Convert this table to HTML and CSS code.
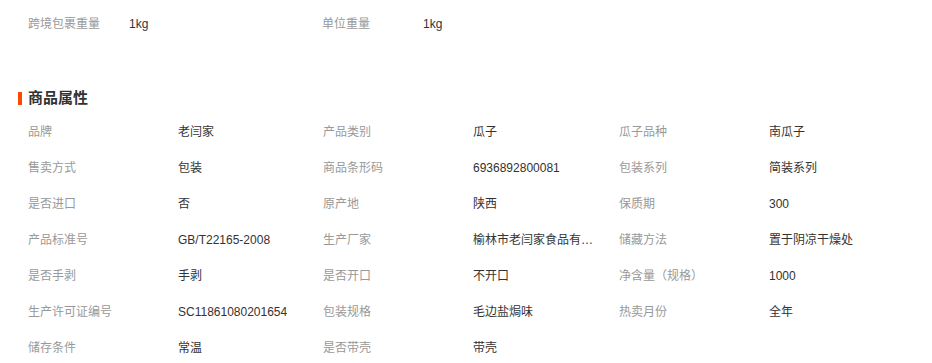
FILE: index.html
```html
<!DOCTYPE html>
<html lang="zh-CN">
<head>
<meta charset="utf-8">
<title>商品属性</title>
<link rel="stylesheet" href="styles.css">
</head>
<body>
<div class="page">
  <div class="weight-row">
    <div class="weight-item"><span class="w-label">跨境包裹重量</span><span class="w-value">1kg</span></div>
    <div class="weight-item"><span class="w-label">单位重量</span><span class="w-value">1kg</span></div>
  </div>

  <h2 class="section-title">商品属性</h2>

  <ul class="attrs">
    <li class="attr"><span class="a-label">品牌</span><span class="a-value">老闫家</span></li>
    <li class="attr"><span class="a-label">产品类别</span><span class="a-value">瓜子</span></li>
    <li class="attr"><span class="a-label">瓜子品种</span><span class="a-value">南瓜子</span></li>

    <li class="attr"><span class="a-label">售卖方式</span><span class="a-value">包装</span></li>
    <li class="attr"><span class="a-label">商品条形码</span><span class="a-value">6936892800081</span></li>
    <li class="attr"><span class="a-label">包装系列</span><span class="a-value">简装系列</span></li>

    <li class="attr"><span class="a-label">是否进口</span><span class="a-value">否</span></li>
    <li class="attr"><span class="a-label">原产地</span><span class="a-value">陕西</span></li>
    <li class="attr"><span class="a-label">保质期</span><span class="a-value">300</span></li>

    <li class="attr"><span class="a-label">产品标准号</span><span class="a-value">GB/T22165-2008</span></li>
    <li class="attr"><span class="a-label">生产厂家</span><span class="a-value" title="榆林市老闫家食品有限公司">榆林市老闫家食品有限公司</span></li>
    <li class="attr"><span class="a-label">储藏方法</span><span class="a-value">置于阴凉干燥处</span></li>

    <li class="attr"><span class="a-label">是否手剥</span><span class="a-value">手剥</span></li>
    <li class="attr"><span class="a-label">是否开口</span><span class="a-value">不开口</span></li>
    <li class="attr"><span class="a-label">净含量（规格）</span><span class="a-value">1000</span></li>

    <li class="attr"><span class="a-label">生产许可证编号</span><span class="a-value">SC11861080201654</span></li>
    <li class="attr"><span class="a-label">包装规格</span><span class="a-value">毛边盐焗味</span></li>
    <li class="attr"><span class="a-label">热卖月份</span><span class="a-value">全年</span></li>

    <li class="attr"><span class="a-label">储存条件</span><span class="a-value">常温</span></li>
    <li class="attr"><span class="a-label">是否带壳</span><span class="a-value">带壳</span></li>
  </ul>
</div>
</body>
</html>
```

FILE: styles.css
```css
* { box-sizing: border-box; }

html, body {
  margin: 0;
  padding: 0;
  background: #fff;
}

body {
  font-family: "Liberation Sans", "Noto Sans CJK SC", sans-serif;
  font-size: 12px;
  line-height: 18px;
  color: #333;
}

.page {
  width: 932px;
  overflow: hidden;
}

.weight-row {
  display: flex;
  height: 48px;
  align-items: center;
  padding-left: 28px;
}

.weight-item {
  display: flex;
  align-items: baseline;
  width: 294px;
}

.w-label {
  width: 101px;
  color: #999;
}

.w-value {
  color: #333;
}

.section-title {
  margin: 41px 0 0 18px;
  height: 18px;
  display: flex;
  align-items: center;
  font-size: 15px;
  font-weight: bold;
  color: #333;
  line-height: 18px;
}

.section-title::before {
  content: "";
  display: block;
  width: 4px;
  height: 13px;
  background: #ff4a00;
  margin-right: 6px;
}

.attrs {
  list-style: none;
  margin: 7px 0 0 0;
  padding: 0 0 0 28px;
  display: grid;
  grid-template-columns: 295px 296px 295px;
  grid-auto-rows: 36px;
}

.attr {
  display: flex;
  align-items: center;
}

.a-label {
  width: 150px;
  flex: none;
  color: #999;
}

.a-value {
  display: block;
  max-width: 124px;
  white-space: nowrap;
  overflow: hidden;
  text-overflow: ellipsis;
  color: #333;
}
```
